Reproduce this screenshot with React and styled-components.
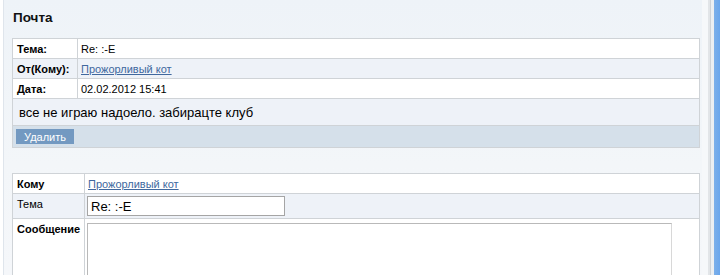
import React from "react";
import styled, { createGlobalStyle } from "styled-components";

const GlobalStyle = createGlobalStyle`
  html, body {
    margin: 0;
    padding: 0;
    background: #ffffff;
  }
  body {
    font-family: "Liberation Sans", Arial, sans-serif;
    font-size: 11px;
    color: #000;
  }
`;

const Page = styled.div`
  display: flex;
  width: 720px;
  height: 275px;
  overflow: hidden;
`;

const Main = styled.div`
  flex: 1;
  margin-left: 3px;
  border-left: 1px solid #dfe5ec;
  background: linear-gradient(180deg, #eef3f8 0%, #f3f6f9 60%, #f5f7fa 100%);
  padding: 0 0 0 8px;
`;

const Edge = styled.div`
  width: 18px;
  display: flex;
  background: #f3f5f7;
`;

const EdgeLine = styled.div`
  width: ${(p) => p.w}px;
  background: ${(p) => p.c};
`;

const Title = styled.h2`
  margin: 0;
  padding: 10px 0 0 1px;
  height: 38px;
  box-sizing: border-box;
  font-size: 13.5px;
  font-weight: bold;
  color: #111;
`;

const Table = styled.table`
  width: 688px;
  border-collapse: collapse;
  table-layout: fixed;
`;

const Row = styled.tr`
  background: ${(p) => p.bg || "#ffffff"};
  height: ${(p) => p.h}px;
`;

const Label = styled.td`
  border: 1px solid #cfd3d7;
  padding: 0 4px;
  font-weight: ${(p) => (p.light ? "normal" : "bold")};
  vertical-align: ${(p) => (p.top ? "top" : "middle")};
  padding-top: ${(p) => (p.top ? 4 : 0)}px;
  width: ${(p) => p.w}px;
`;

const Value = styled.td`
  border: 1px solid #cfd3d7;
  padding: 0 3px;
  vertical-align: ${(p) => (p.top ? "top" : "middle")};
  padding-top: ${(p) => (p.top ? 4 : 0)}px;
`;

const Wide = styled.td`
  border: 1px solid #cfd3d7;
  padding: ${(p) => p.pad || "0 6px"};
  font-size: ${(p) => p.fs || 11}px;
`;

const UserLink = styled.a`
  color: #40689e;
  text-decoration: underline;
  cursor: pointer;
`;

const DeleteButton = styled.button`
  background: #7399c1;
  border: none;
  color: #fff;
  font-family: "Liberation Sans", Arial, sans-serif;
  font-size: 11px;
  width: 58px;
  height: 15px;
  padding: 0;
  display: block;
`;

const Spacer = styled.div`
  height: 25px;
`;

const SubjectInput = styled.input`
  box-sizing: border-box;
  width: 198px;
  height: 20px;
  border: 1px solid #a5a5a5;
  font-family: "Liberation Sans", Arial, sans-serif;
  font-size: 13px;
  padding: 1px 3px 0;
  margin-left: -1px;
  display: block;
`;

const MessageArea = styled.textarea`
  box-sizing: border-box;
  width: 585px;
  height: 80px;
  margin-left: -1px;
  border: 1px solid #b9b9b9;
  border-right-color: #d8d8d8;
  resize: none;
  display: block;
`;

export default function App() {
  return (
    <>
      <GlobalStyle />
      <Page>
        <Main>
          <Title>Почта</Title>
          <Table>
            <tbody>
              <Row h={20}>
                <Label w={56}>Тема:</Label>
                <Value>Re: :-E</Value>
              </Row>
              <Row h={20} bg="#eef2f8">
                <Label w={56}>От(Кому):</Label>
                <Value>
                  <UserLink>Прожорливый кот</UserLink>
                </Value>
              </Row>
              <Row h={20}>
                <Label w={56}>Дата:</Label>
                <Value>02.02.2012 15:41</Value>
              </Row>
              <Row h={27} bg="#eef2f8">
                <Wide colSpan={2} fs={13}>
                  все не играю надоело. забирацте клуб
                </Wide>
              </Row>
              <Row h={22} bg="#d5e0ea">
                <Wide colSpan={2} pad="0 3px">
                  <DeleteButton>Удалить</DeleteButton>
                </Wide>
              </Row>
            </tbody>
          </Table>
          <Spacer />
          <Table>
            <tbody>
              <Row h={20}>
                <Label w={63}>Кому</Label>
                <Value>
                  <UserLink>Прожорливый кот</UserLink>
                </Value>
              </Row>
              <Row h={25} bg="#eef2f8">
                <Label w={63} light top>
                  Тема
                </Label>
                <Value>
                  <SubjectInput defaultValue="Re: :-E" />
                </Value>
              </Row>
              <Row h={80}>
                <Label w={63} top>
                  Сообщение
                </Label>
                <Value top>
                  <MessageArea />
                </Value>
              </Row>
            </tbody>
          </Table>
        </Main>
        <Edge>
          <EdgeLine w={6} c="#f6f8fa" />
          <EdgeLine w={2} c="#e2e5e8" />
          <EdgeLine w={1} c="#cfd3d7" />
          <EdgeLine w={3} c="#eceff2" />
          <EdgeLine w={6} c="linear-gradient(90deg, #7cb0ea, #6aa6ec)" />
        </Edge>
      </Page>
    </>
  );
}
